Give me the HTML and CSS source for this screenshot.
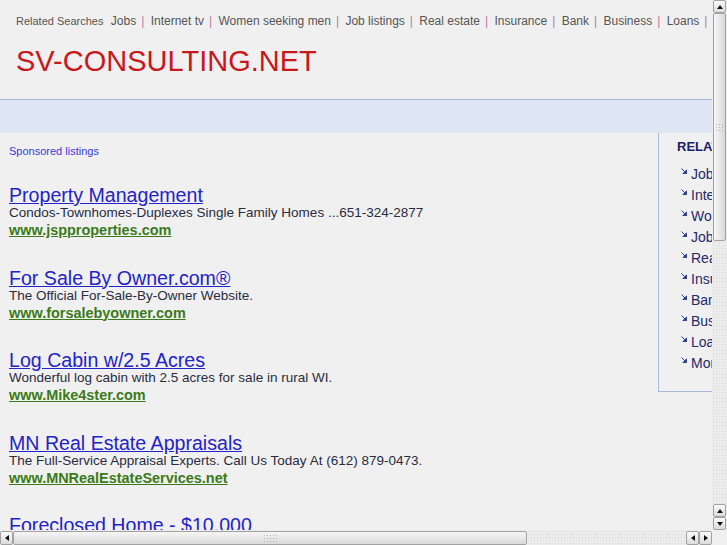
FILE: index.html
```html
<!DOCTYPE html>
<html lang="en">
<head>
    <meta charset="UTF-8">
    <title>sv-consulting.net</title>
    <link rel="stylesheet" href="styles.css">
</head>
<body>
    <div class="page">
        <header class="top">
            <div class="related-bar">
                <span class="related-label">Related Searches</span>
                <a href="#">Jobs</a><span class="sep">|</span>
                <a href="#">Internet tv</a><span class="sep">|</span>
                <a href="#">Women seeking men</a><span class="sep">|</span>
                <a href="#">Job listings</a><span class="sep">|</span>
                <a href="#">Real estate</a><span class="sep">|</span>
                <a href="#">Insurance</a><span class="sep">|</span>
                <a href="#">Bank</a><span class="sep">|</span>
                <a href="#">Business</a><span class="sep">|</span>
                <a href="#">Loans</a><span class="sep">|</span>
                <a href="#">Mortgage</a>
            </div>
            <h1 class="domain">SV-CONSULTING.NET</h1>
        </header>

        <div class="band"></div>

        <div class="content">
            <div class="listings">
                <div class="sponsored">Sponsored listings</div>

                <div class="ad">
                    <a class="ad-title" href="#">Property Management</a>
                    <div class="ad-desc">Condos-Townhomes-Duplexes Single Family Homes ...651-324-2877</div>
                    <a class="ad-url" href="#">www.jspproperties.com</a>
                </div>
                <div class="ad">
                    <a class="ad-title" href="#">For Sale By Owner.com&reg;</a>
                    <div class="ad-desc">The Official For-Sale-By-Owner Website.</div>
                    <a class="ad-url" href="#">www.forsalebyowner.com</a>
                </div>
                <div class="ad">
                    <a class="ad-title" href="#">Log Cabin w/2.5 Acres</a>
                    <div class="ad-desc">Wonderful log cabin with 2.5 acres for sale in rural WI.</div>
                    <a class="ad-url" href="#">www.Mike4ster.com</a>
                </div>
                <div class="ad">
                    <a class="ad-title" href="#">MN Real Estate Appraisals</a>
                    <div class="ad-desc">The Full-Service Appraisal Experts. Call Us Today At (612) 879-0473.</div>
                    <a class="ad-url" href="#">www.MNRealEstateServices.net</a>
                </div>
                <div class="ad">
                    <a class="ad-title" href="#">Foreclosed Home - $10,000</a>
                    <div class="ad-desc">Bank owned homes from $10,000. Find great deals in your area.</div>
                    <a class="ad-url" href="#">www.foreclosures.com</a>
                </div>
            </div>

            <aside class="sidebar">
                <h3>RELATED SEARCHES</h3>
                <ul>
                    <li><svg class="arrow" viewBox="0 0 6 6"><path d="M0.5 0.5 L4.5 4.5"/><polygon points="5.8,1.8 5.8,5.8 1.8,5.8"/></svg><a href="#">Jobs</a></li>
                    <li><svg class="arrow" viewBox="0 0 6 6"><path d="M0.5 0.5 L4.5 4.5"/><polygon points="5.8,1.8 5.8,5.8 1.8,5.8"/></svg><a href="#">Internet tv</a></li>
                    <li><svg class="arrow" viewBox="0 0 6 6"><path d="M0.5 0.5 L4.5 4.5"/><polygon points="5.8,1.8 5.8,5.8 1.8,5.8"/></svg><a href="#">Women seeking men</a></li>
                    <li><svg class="arrow" viewBox="0 0 6 6"><path d="M0.5 0.5 L4.5 4.5"/><polygon points="5.8,1.8 5.8,5.8 1.8,5.8"/></svg><a href="#">Job listings</a></li>
                    <li><svg class="arrow" viewBox="0 0 6 6"><path d="M0.5 0.5 L4.5 4.5"/><polygon points="5.8,1.8 5.8,5.8 1.8,5.8"/></svg><a href="#">Real estate</a></li>
                    <li><svg class="arrow" viewBox="0 0 6 6"><path d="M0.5 0.5 L4.5 4.5"/><polygon points="5.8,1.8 5.8,5.8 1.8,5.8"/></svg><a href="#">Insurance</a></li>
                    <li><svg class="arrow" viewBox="0 0 6 6"><path d="M0.5 0.5 L4.5 4.5"/><polygon points="5.8,1.8 5.8,5.8 1.8,5.8"/></svg><a href="#">Bank</a></li>
                    <li><svg class="arrow" viewBox="0 0 6 6"><path d="M0.5 0.5 L4.5 4.5"/><polygon points="5.8,1.8 5.8,5.8 1.8,5.8"/></svg><a href="#">Business</a></li>
                    <li><svg class="arrow" viewBox="0 0 6 6"><path d="M0.5 0.5 L4.5 4.5"/><polygon points="5.8,1.8 5.8,5.8 1.8,5.8"/></svg><a href="#">Loans</a></li>
                    <li><svg class="arrow" viewBox="0 0 6 6"><path d="M0.5 0.5 L4.5 4.5"/><polygon points="5.8,1.8 5.8,5.8 1.8,5.8"/></svg><a href="#">Mortgage</a></li>
                </ul>
            </aside>
        </div>
    </div>

    <!-- window scrollbars -->
    <div class="vscroll">
        <div class="sb-btn"><span class="tri up"></span></div>
        <div class="sb-thumb v"><span class="grip"></span></div>
        <div class="sb-track"></div>
        <div class="sb-btn"><span class="tri up"></span></div>
        <div class="sb-btn"><span class="tri down"></span></div>
    </div>
    <div class="hscroll">
        <div class="sb-btn h"><span class="tri left"></span></div>
        <div class="sb-thumb h"><span class="grip"></span></div>
        <div class="sb-track"></div>
        <div class="sb-btn h"><span class="tri left"></span></div>
        <div class="sb-btn h"><span class="tri right"></span></div>
    </div>
    <div class="sb-corner"></div>
</body>
</html>
```

FILE: styles.css
```css
html, body {
    margin: 0;
    padding: 0;
    overflow: hidden;
    height: 100%;
}

body {
    font-family: "Liberation Sans", Arial, sans-serif;
    background-color: #f0f0f0;
}

a {
    text-decoration: none;
}

.page {
    width: 900px;
}

/* header */
.top {
    height: 100px;
    border-bottom: 1px solid #a9b9dc;
    padding: 14px 0 0 16px;
    box-sizing: border-box;
}

.related-bar {
    white-space: nowrap;
    font-size: 12px;
    line-height: 15px;
    color: #555;
}

.related-label {
    font-size: 11px;
    margin-right: 4px;
}

.related-bar a {
    color: #555;
}

.sep {
    color: #b87aa0;
    margin: 0 3px 0 5px;
}

.domain {
    margin: 15px 0 0 0;
    font-size: 29px;
    font-weight: normal;
    line-height: 34px;
    color: #c8181c;
}

.band {
    height: 33px;
    background-color: #dee6f4;
}

/* main area */
.content {
    display: flex;
    align-items: flex-start;
}

.listings {
    width: 649px;
    padding: 11px 0 0 9px;
}

.sponsored {
    font-size: 11px;
    line-height: 14px;
    color: #3a3ad8;
    margin-bottom: 27px;
}

.ad {
    margin-bottom: 28.5px;
}

.ad-title {
    display: block;
    font-size: 19.6px;
    line-height: 20px;
    color: #2323c8;
    text-decoration: underline;
}

.ad-desc {
    font-size: 13.5px;
    line-height: 16px;
    color: #2a2c40;
}

.ad-url {
    display: block;
    font-size: 14.45px;
    line-height: 18px;
    font-weight: bold;
    color: #3b7a18;
    text-decoration: underline;
}

.sidebar {
    width: 220px;
    border-left: 1px solid #a9b9dc;
    border-bottom: 1px solid #a9b9dc;
    padding: 6px 0 17px 18px;
}

.sidebar h3 {
    margin: 0 0 9px 0;
    font-size: 13px;
    line-height: 16px;
    color: #1b2163;
}

.sidebar ul {
    list-style: none;
    margin: 0;
    padding: 0;
}

.sidebar li {
    font-size: 14px;
    line-height: 21px;
    white-space: nowrap;
}

.arrow {
    width: 6px;
    height: 6px;
    margin: 0 4px 0 4px;
    vertical-align: 5px;
    fill: #2a3a8a;
    stroke: #2a3a8a;
    stroke-width: 1;
}

.sidebar li a {
    color: #232a6a;
}

/* scrollbars */
.vscroll {
    position: fixed;
    top: 0;
    right: 0;
    width: 15px;
    height: 530px;
    display: flex;
    flex-direction: column;
    background-color: #ececec;
}

.hscroll {
    position: fixed;
    left: 0;
    bottom: 0;
    width: 712px;
    height: 15px;
    display: flex;
    background-color: #ececec;
}

.sb-corner {
    position: fixed;
    right: 0;
    bottom: 0;
    width: 15px;
    height: 15px;
    background-color: #f0f0f0;
}

.sb-track {
    flex: 1;
    background-image: radial-gradient(#d8d8d8 0.6px, transparent 0.7px);
    background-size: 3px 3px;
}

.sb-btn {
    height: 13px;
    margin: 0 1px;
    border: 1px solid #a2a2a2;
    border-radius: 2px;
    background: linear-gradient(#fbfbfb, #dcdcdc);
    display: flex;
    align-items: center;
    justify-content: center;
    box-sizing: border-box;
    flex: none;
}

.sb-btn.h {
    width: 13px;
    height: 14px;
    margin: 1px 0 0 0;
}

.sb-thumb {
    border: 1px solid #a2a2a2;
    border-radius: 2px;
    box-sizing: border-box;
    display: flex;
    align-items: center;
    justify-content: center;
    flex: none;
}

.sb-thumb.v {
    height: 228px;
    margin: 0 1px;
    background: linear-gradient(90deg, #f6f6f6, #d9d9d9);
}

.sb-thumb.h {
    width: 514px;
    margin-top: 1px;
    background: linear-gradient(#f6f6f6, #d9d9d9);
}

.grip {
    width: 9px;
    height: 9px;
    background-image: radial-gradient(#b4b4b4 0.7px, transparent 0.8px);
    background-size: 3px 3px;
}

.sb-thumb.h .grip {
    width: 14px;
    height: 9px;
}

.tri {
    width: 0;
    height: 0;
    border: 3px solid transparent;
}

.tri.up {
    border-bottom: 4px solid #111;
    border-top: 0;
}

.tri.down {
    border-top: 4px solid #111;
    border-bottom: 0;
}

.tri.left {
    border-right: 4px solid #111;
    border-left: 0;
}

.tri.right {
    border-left: 4px solid #111;
    border-right: 0;
}
```
